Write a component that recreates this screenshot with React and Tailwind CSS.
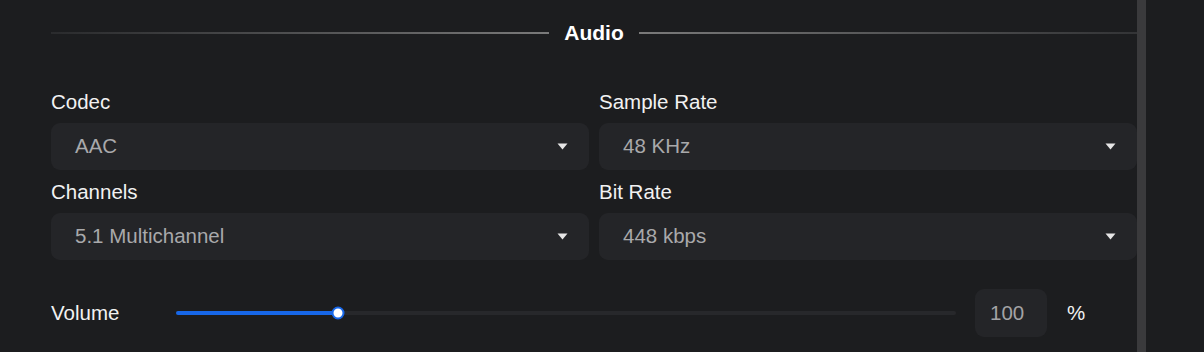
import React from 'react';

const font = { fontFamily: '"Liberation Sans", Arial, sans-serif' };

function Chevron() {
  return (
    <svg width="11" height="7" viewBox="0 0 11 7" className="shrink-0">
      <path d="M0.5 0.5 H10.5 L5.5 6.5 Z" fill="#e6e6e6" />
    </svg>
  );
}

function SelectField({ label, value }) {
  return (
    <div className="flex flex-col">
      <div className="h-[24px] leading-[24px] text-[20.5px] text-[#f2f2f2]">{label}</div>
      <div className="mt-[9px] h-[47px] rounded-[9px] bg-[#242528] flex items-center justify-between pl-[24px] pr-[21px]">
        <span className="text-[20.5px] text-[#a9a9ab]">{value}</span>
        <Chevron />
      </div>
    </div>
  );
}

export default function App() {
  const volume = 100;
  const pct = volume / 500;

  return (
    <div className="w-[1204px] h-[352px] bg-[#1c1d1f] flex overflow-hidden" style={font}>
      {/* Scrollable settings panel */}
      <div className="w-[1137px] pl-[51px] flex flex-col">
        {/* Section heading */}
        <div className="mt-[21px] h-[24px] flex items-center">
          <div className="flex-1 h-[2px] bg-gradient-to-r from-[#2a2b2d] to-[#7a7a7a]" />
          <span className="px-[15px] text-[21px] font-bold text-white leading-[24px]">Audio</span>
          <div className="flex-1 h-[2px] bg-gradient-to-r from-[#7a7a7a] to-[#333436]" />
        </div>

        <div className="mt-[45px] grid grid-cols-2 gap-x-[10px] gap-y-[10px]">
          <SelectField label="Codec" value="AAC" />
          <SelectField label="Sample Rate" value="48 KHz" />
          <SelectField label="Channels" value="5.1 Multichannel" />
          <SelectField label="Bit Rate" value="448 kbps" />
        </div>

        {/* Volume */}
        <div className="mt-[29px] h-[48px] flex items-center">
          <span className="w-[125px] text-[20.5px] text-[#f2f2f2]">Volume</span>
          <div className="relative w-[780px] h-[4px] rounded-full bg-[#27282b]">
            <div className="h-full rounded-full bg-[#1767e8]" style={{ width: `${pct * 780 + 6}px` }} />
            <div
              className="absolute top-1/2 -translate-y-1/2 -translate-x-1/2 w-[13px] h-[13px] rounded-full bg-white border-[2px] border-[#1767e8]"
              style={{ left: `${pct * 780 + 6}px` }}
            />
          </div>
          <div className="ml-[19px] w-[72px] h-[48px] rounded-[9px] bg-[#242528] flex items-center pl-[15px] text-[20.5px] text-[#a3a3a5]">
            {volume}
          </div>
          <span className="ml-[20px] text-[20.5px] text-[#f2f2f2]">%</span>
        </div>
      </div>

      {/* Scrollbar */}
      <div className="w-[9px] h-full bg-[#3a3a3c]" />
      <div className="flex-1" />
    </div>
  );
}
